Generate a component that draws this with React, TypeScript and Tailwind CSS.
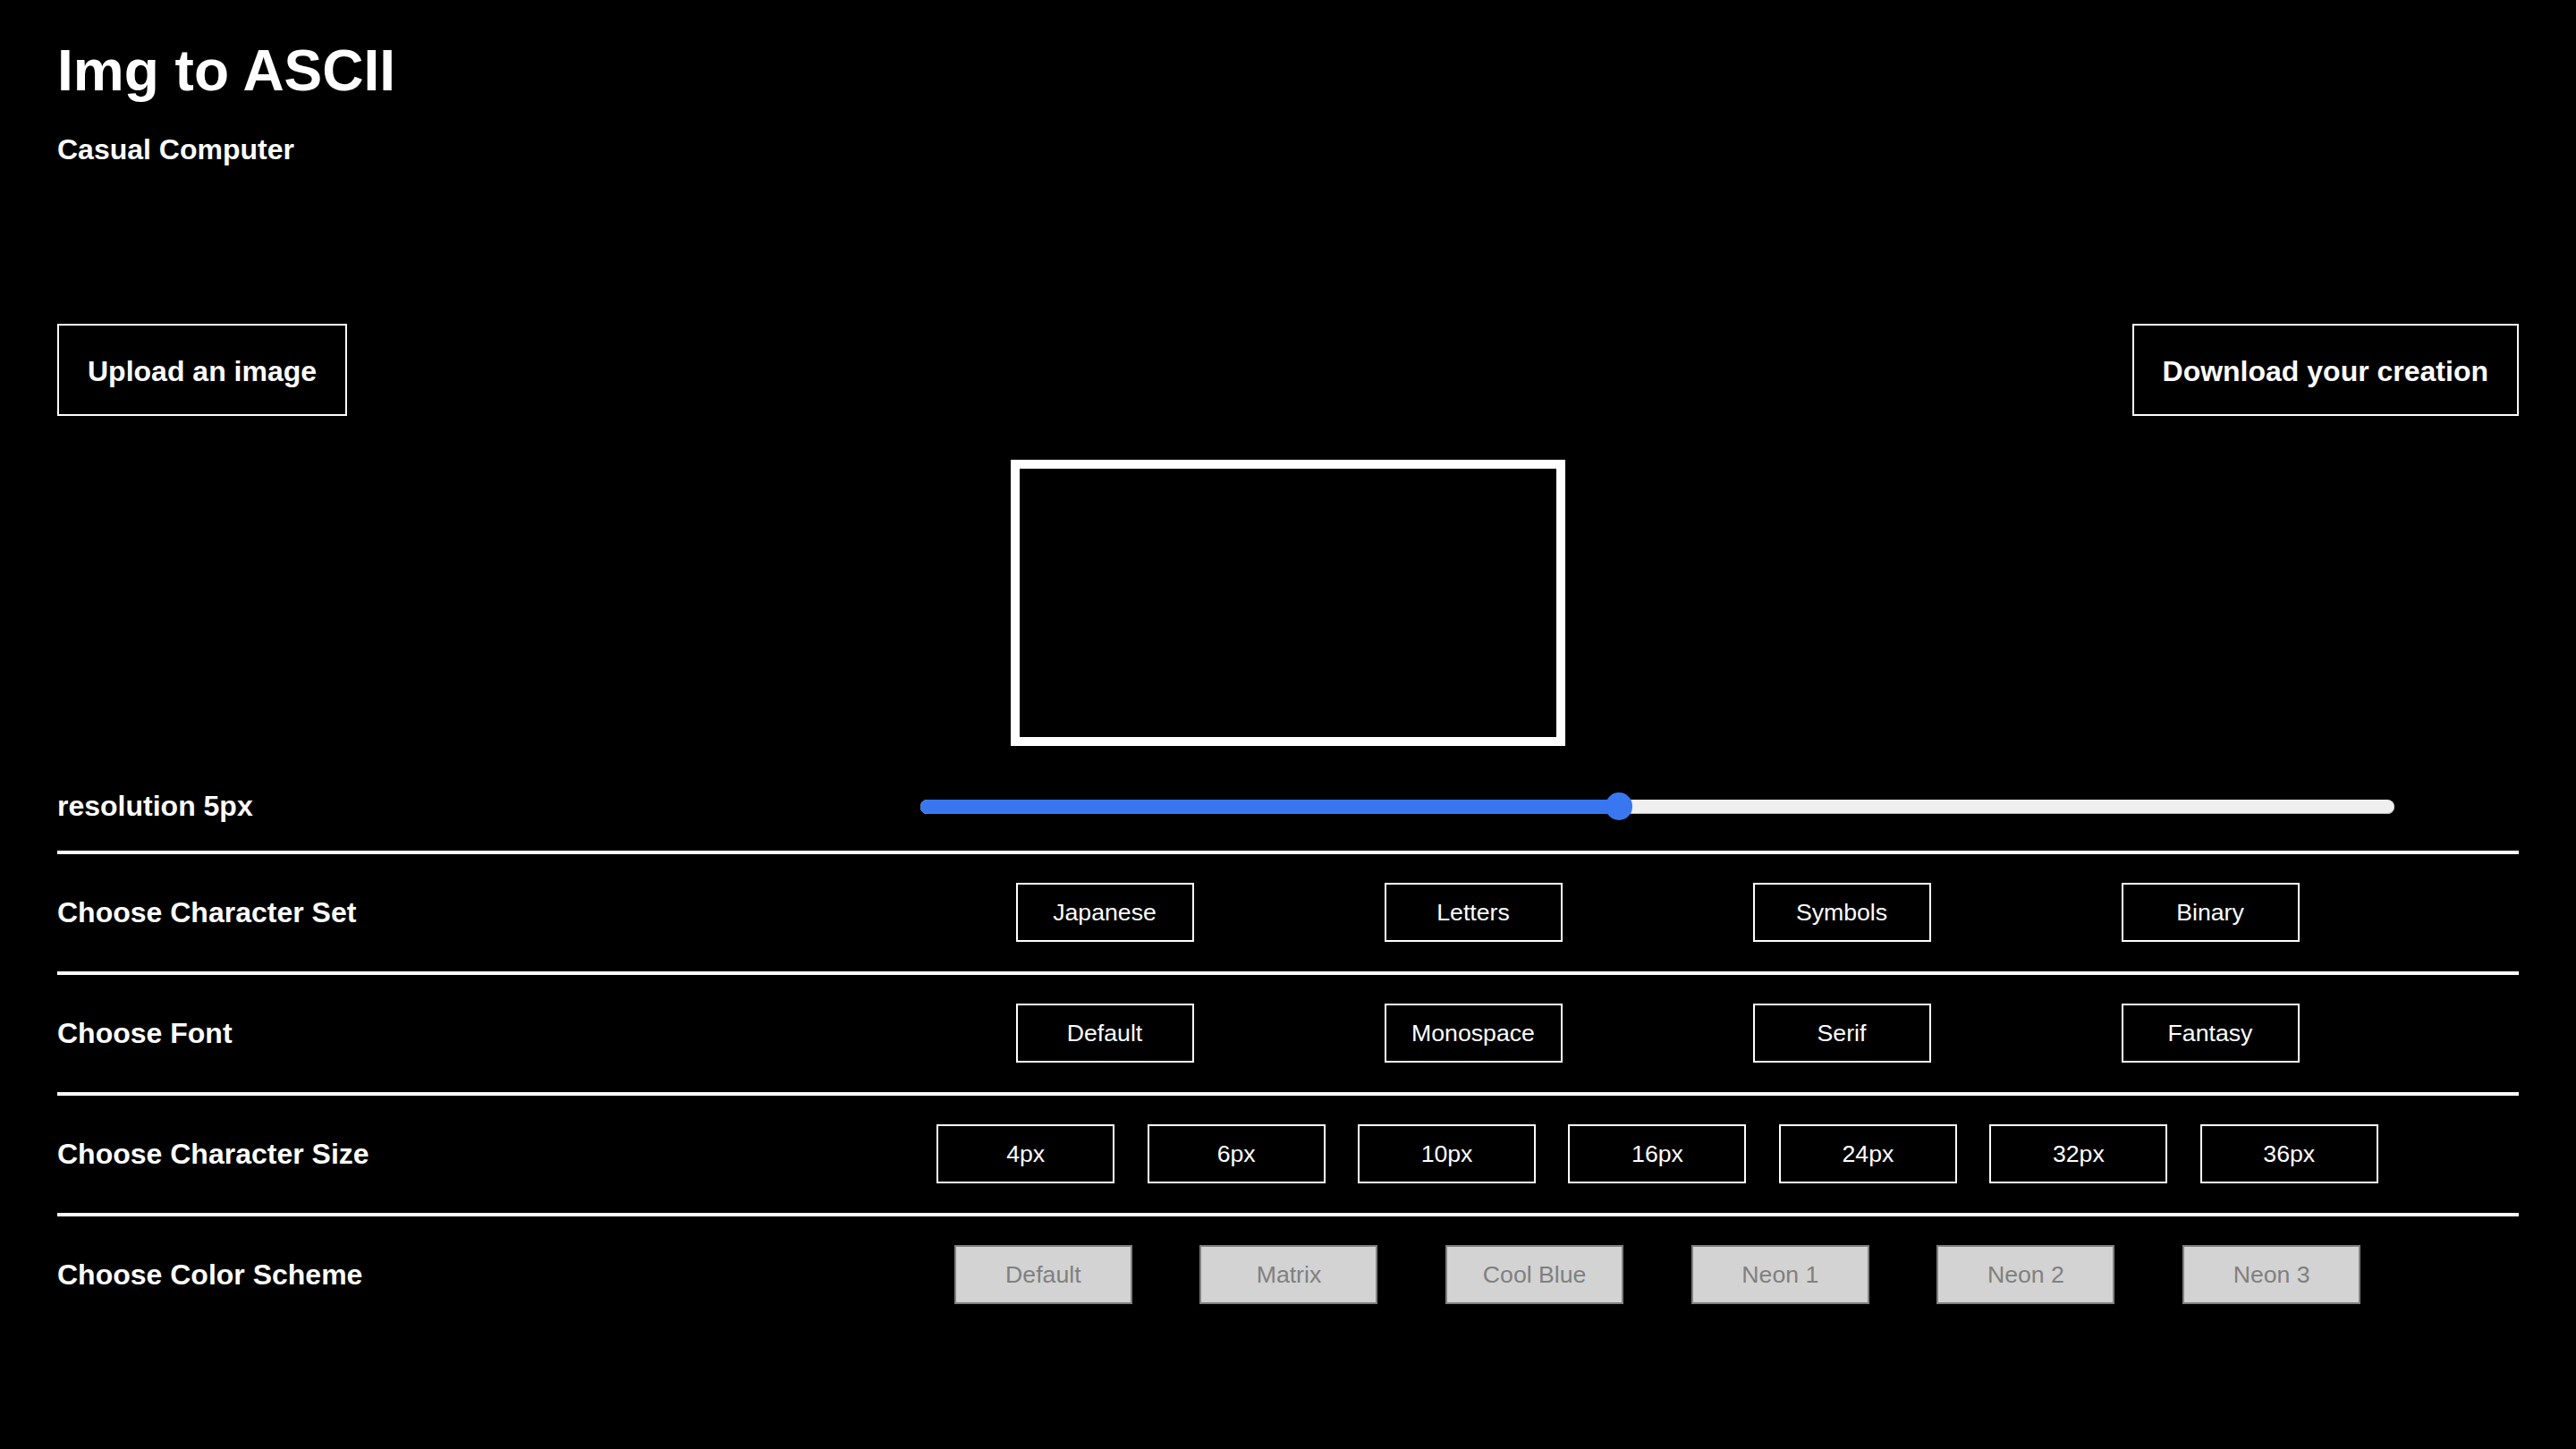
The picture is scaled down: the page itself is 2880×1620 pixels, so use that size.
import { useState } from "react";

const charSets = ["Japanese", "Letters", "Symbols", "Binary"];
const fonts = ["Default", "Monospace", "Serif", "Fantasy"];
const sizes = ["4px", "6px", "10px", "16px", "24px", "32px", "36px"];
const schemes = ["Default", "Matrix", "Cool Blue", "Neon 1", "Neon 2", "Neon 3"];

function OptionRow({
  label,
  options,
  disabled,
}: {
  label: string;
  options: string[];
  disabled?: boolean;
}) {
  return (
    <div className="flex items-center border-t-4 border-white pt-8 pb-[33px]">
      <div className="w-[965px] text-[32px] font-bold leading-[37px]">{label}</div>
      <div className="flex w-[1648px] justify-around">
        {options.map((opt) => (
          <button
            key={opt}
            disabled={disabled}
            className={
              disabled
                ? "h-[66px] w-[199px] border-2 border-[#808080] bg-[#d3d3d3] text-[26.67px] leading-[30px] text-[#808080]"
                : "h-[66px] w-[199px] border-2 border-white bg-black text-[26.67px] leading-[30px] text-white"
            }
          >
            {opt}
          </button>
        ))}
      </div>
    </div>
  );
}

export default function App() {
  const [resolution] = useState(5);

  return (
    <main className="min-h-screen bg-black px-16 pb-24 text-white font-['Liberation_Sans',Arial,sans-serif]">
      {/* Header */}
      <h1 className="pt-[42px] text-[64px] font-bold leading-[74px]">Img to ASCII</h1>
      <p className="mt-[33px] text-[32px] font-bold leading-[37px]">Casual Computer</p>

      {/* Actions */}
      <div className="mt-[176px] flex justify-between">
        <button className="h-[103px] border-2 border-white px-8 pt-[3px] text-[32px] font-bold leading-[37px]">
          Upload an image
        </button>
        <button className="h-[103px] border-2 border-white px-8 pt-[3px] text-[32px] font-bold leading-[37px]">
          Download your creation
        </button>
      </div>

      {/* Canvas */}
      <div className="mx-auto mt-[49px] h-[320px] w-[620px] border-[10px] border-white bg-black" />

      {/* Resolution slider */}
      <div className="mt-[49px] flex items-center pb-[31px]">
        <div className="w-[965px] text-[32px] font-bold leading-[37px]">resolution {resolution}px</div>
        <div className="relative flex h-[31px] w-[1648px] items-center">
          <div className="flex h-4 w-full overflow-hidden rounded-full bg-[#efefef] shadow-[inset_0_-1px_0_#b8b8b8]">
            <div className="h-full w-[781px] bg-[#3877f0]" />
          </div>
          <div className="absolute left-[766px] top-0 h-[31px] w-[30px] rounded-full bg-[#3877f0]" />
        </div>
      </div>

      <OptionRow label="Choose Character Set" options={charSets} />
      <OptionRow label="Choose Font" options={fonts} />
      <OptionRow label="Choose Character Size" options={sizes} />
      <OptionRow label="Choose Color Scheme" options={schemes} disabled />
    </main>
  );
}
